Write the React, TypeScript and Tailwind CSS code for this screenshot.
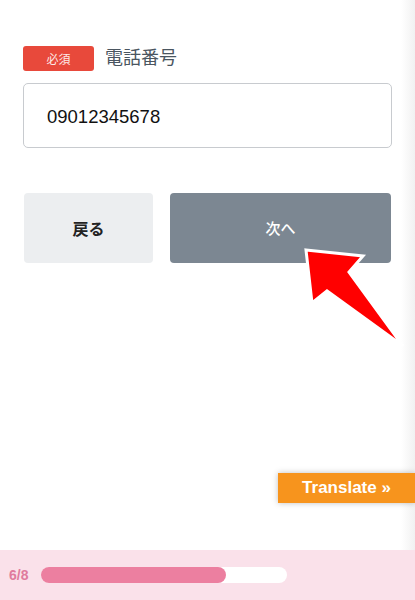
import React from "react";

function Arrow() {
  return (
    <svg
      className="pointer-events-none absolute left-0 top-0"
      width="415"
      height="600"
      viewBox="0 0 415 600"
    >
      <polygon
        points="306,250 363,256 349,272 403,346 327,291 312,303"
        fill="#ff0000"
        stroke="#ffffff"
        strokeWidth="3"
        strokeLinejoin="miter"
      />
    </svg>
  );
}

export default function App() {
  return (
    <div
      className="relative flex h-[600px] w-[415px] flex-col overflow-hidden bg-white"
      style={{ fontFamily: '"Liberation Sans", "Noto Sans CJK JP", sans-serif' }}
    >
      <div className="absolute right-0 top-0 h-full w-[14px] bg-gradient-to-r from-white to-[#f1f1f1]" />

      <div className="relative flex-1 pl-[23px] pr-[23px] pt-[46px]">
        <div className="flex items-center gap-[11px]">
          <span className="flex h-[25px] w-[71px] items-center justify-center rounded-[3px] bg-[#e8493b] text-[12px] text-[#fde8e6] [font-family:'Noto_Sans_CJK_JP',sans-serif]">
            必須
          </span>
          <span className="pb-[6px] text-[18px] leading-none text-[#4a5560] [font-family:'Noto_Sans_CJK_JP',sans-serif]">
            電話番号
          </span>
        </div>

        <div className="mt-[12px] flex h-[65px] items-center rounded-[5px] border border-[#c8cbcf] bg-white px-[23px] pt-[3px] text-[18.5px] text-[#111]">
          09012345678
        </div>

        <div className="mt-[45px] flex gap-[17px] pl-px pr-px">
          <button className="flex h-[70px] w-[129px] items-center justify-center rounded-[4px] bg-[#eceef0] text-[16px] font-bold text-[#222] [font-family:'Noto_Sans_CJK_JP',sans-serif]">
            戻る
          </button>
          <button className="flex h-[70px] flex-1 items-center justify-center rounded-[4px] bg-[#7c8792] text-[15px] font-medium text-white [font-family:'Noto_Sans_CJK_JP',sans-serif]">
            次へ
          </button>
        </div>
      </div>

      <div className="relative flex h-[50px] items-center bg-[#fae1ea] pl-[9px]">
        <span className="w-[32px] text-[14px] font-bold text-[#e07b9d]">6/8</span>
        <div className="h-[16px] w-[246px] rounded-full bg-white">
          <div className="h-full w-[185px] rounded-full bg-[#ec7fa0]" />
        </div>
      </div>

      <div className="absolute bottom-[97px] right-0 flex h-[30px] w-[137px] items-center justify-center bg-[#f7941d] text-[17px] font-bold text-white shadow-[0_0_6px_rgba(0,0,0,0.25)]">
        Translate »
      </div>

      <Arrow />
    </div>
  );
}
